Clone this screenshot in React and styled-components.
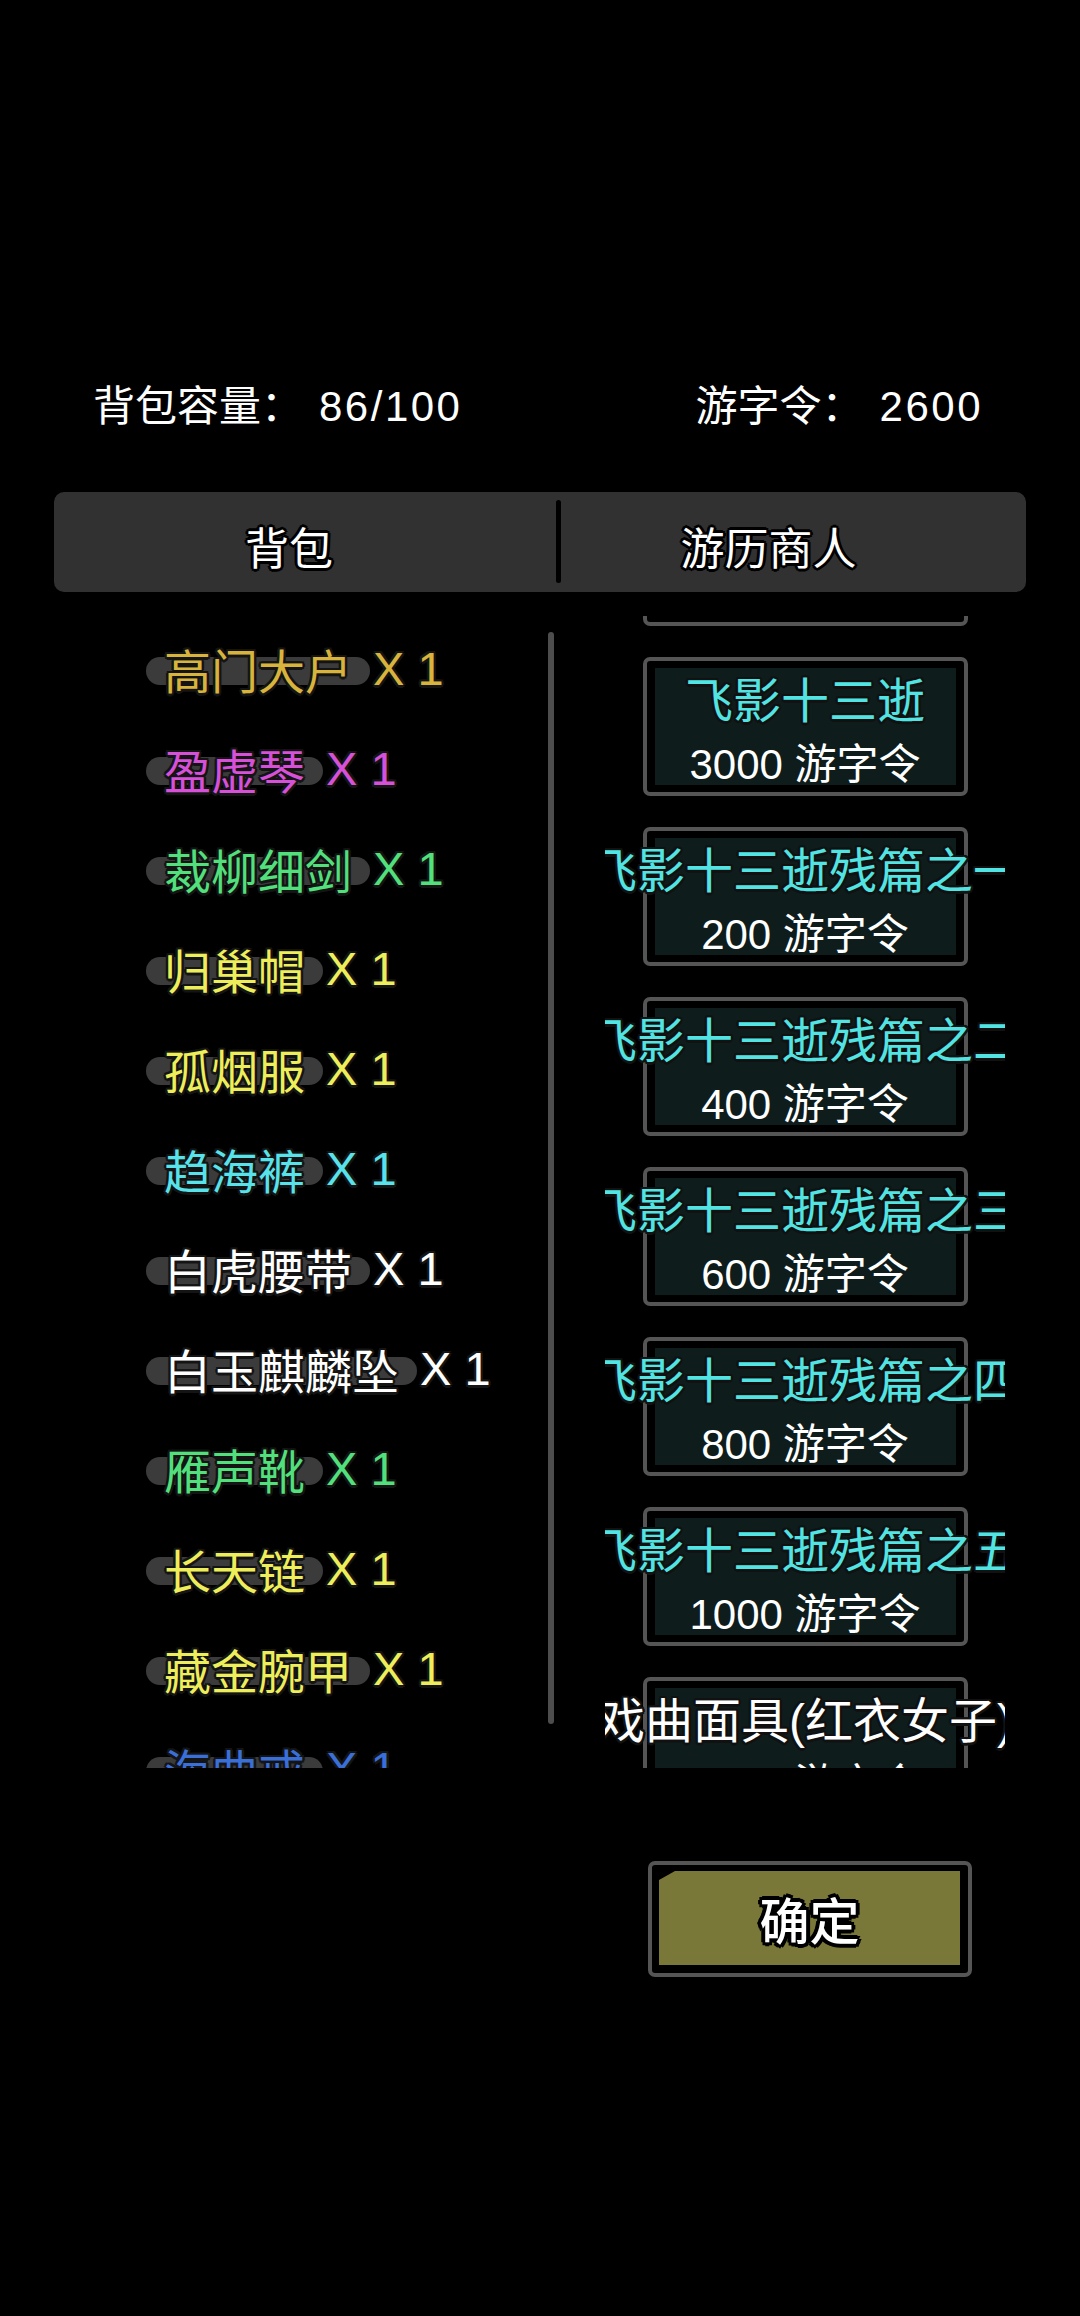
import styled, { createGlobalStyle } from "styled-components";

const outline = (c, w) => {
  const d = (w * 0.7).toFixed(1);
  return `${w}px 0 ${c}, -${w}px 0 ${c}, 0 ${w}px ${c}, 0 -${w}px ${c}, ${d}px ${d}px ${c}, -${d}px ${d}px ${c}, ${d}px -${d}px ${c}, -${d}px -${d}px ${c}`;
};

const GlobalStyle = createGlobalStyle`
  html, body {
    margin: 0;
    padding: 0;
    background: #000;
  }
  body {
    font-family: "Liberation Sans", "Noto Sans CJK SC", sans-serif;
    color: #fff;
  }
`;

const Page = styled.div`
  width: 1080px;
  min-height: 2316px;
  padding-top: 377px;
  box-sizing: border-box;
  background: #000;
`;

const Header = styled.div`
  display: flex;
  justify-content: space-between;
  padding: 0 97px 0 93px;
  height: 60px;
  line-height: 60px;
  font-size: 42px;
  color: #fff;
`;

const Stat = styled.div`
  display: flex;
  gap: 16px;
  white-space: nowrap;
`;

const StatValue = styled.span`
  letter-spacing: 2.5px;
`;

const TabBar = styled.div`
  display: flex;
  margin: 55px 54px 0;
  height: 100px;
  background: #313131;
  border-radius: 10px;
`;

const Tab = styled.div`
  flex: ${(p) => (p.$width ? "none" : "1")};
  width: ${(p) => (p.$width ? `${p.$width}px` : "auto")};
  box-sizing: border-box;
  display: flex;
  align-items: center;
  justify-content: center;
  padding-right: ${(p) => p.$shift}px;
  padding-top: 8px;
  font-size: 44px;
  color: #fff;
  text-shadow: ${outline("#000", 3)};
`;

const Divider = styled.div`
  width: 5px;
  margin: 8px 0 9px;
  background: #000;
  border-radius: 3px;
`;

const Content = styled.div`
  display: flex;
  margin-top: 24px;
  height: 1152px;
`;

const LeftPanel = styled.div`
  width: 548px;
  overflow: hidden;
  padding-top: 2px;
  box-sizing: border-box;
`;

const Item = styled.div`
  height: 100px;
  display: flex;
  align-items: center;
  padding-left: 164px;
  font-size: 47px;
  white-space: nowrap;
  position: relative;
  isolation: isolate;
  color: ${(p) => p.$color};
  text-shadow: ${outline("#141414", 2.5)};
`;

const Name = styled.span`
  position: relative;
  &::before {
    content: "";
    position: absolute;
    left: -18px;
    right: -18px;
    top: 54%;
    height: 28px;
    transform: translateY(-50%);
    border-radius: 14px;
    background: #3b3b3b;
    z-index: -1;
  }
`;

const Count = styled.span`
  margin-left: 21px;
`;

const Scrollbar = styled.div`
  width: 6px;
  margin-top: 16px;
  height: 1092px;
  background: #4d4d4d;
  border-radius: 3px;
`;

const RightPanel = styled.div`
  margin-left: 51px;
  width: 400px;
  overflow: hidden;
  display: flex;
  flex-direction: column;
  align-items: center;
  gap: 31px;
  & > :first-child {
    margin-top: -129px;
  }
`;

const Card = styled.div`
  flex: none;
  width: 325px;
  height: 139px;
  box-sizing: border-box;
  border: 4px solid #555;
  border-radius: 7px;
  padding: 7px 8px;
  background: #000;
`;

const CardFill = styled.div`
  height: 100%;
  box-sizing: border-box;
  padding-top: 8px;
  background: #0e1c1c;
  display: flex;
  flex-direction: column;
  align-items: center;
`;

const CardTitle = styled.div`
  flex: none;
  font-size: 48px;
  line-height: 52px;
  white-space: nowrap;
  color: ${(p) => p.$color};
  text-shadow: ${outline("#111", 2.5)};
`;

const CardPrice = styled.div`
  flex: none;
  margin-top: 15px;
  font-size: 42px;
  line-height: 44px;
  white-space: nowrap;
  color: #fff;
`;

const Footer = styled.div`
  margin-top: 93px;
  padding-left: 648px;
`;

const ConfirmButton = styled.div`
  width: 324px;
  height: 116px;
  box-sizing: border-box;
  border: 4px solid #555;
  border-radius: 7px;
  padding: 6px 8px 8px 7px;
  background: #000;
`;

const ConfirmFill = styled.div`
  height: 100%;
  background: #7a7839;
  clip-path: polygon(16px 0, 100% 0, 100% 100%, 0 100%, 0 9px);
  display: flex;
  align-items: center;
  justify-content: center;
  font-size: 50px;
  font-weight: 500;
  color: #fff;
  text-shadow: ${outline("#000", 4)};
`;

const items = [
  { name: "高门大户", color: "#d8b43c" },
  { name: "盈虚琴", color: "#d650d8" },
  { name: "裁柳细剑", color: "#52e07c" },
  { name: "归巢帽", color: "#eeee5a" },
  { name: "孤烟服", color: "#eeee5a" },
  { name: "趋海裤", color: "#58e2ea" },
  { name: "白虎腰带", color: "#ffffff" },
  { name: "白玉麒麟坠", color: "#ffffff" },
  { name: "雁声靴", color: "#52e07c" },
  { name: "长天链", color: "#eeee5a" },
  { name: "藏金腕甲", color: "#eeee5a" },
  { name: "海曲戒", color: "#3a6fd8" },
];

const CYAN = "#52e4e2";

const goods = [
  { title: "飞影十三逝", price: 3000, color: CYAN },
  { title: "飞影十三逝", price: 3000, color: CYAN },
  { title: "飞影十三逝残篇之一", price: 200, color: CYAN },
  { title: "飞影十三逝残篇之二", price: 400, color: CYAN },
  { title: "飞影十三逝残篇之三", price: 600, color: CYAN },
  { title: "飞影十三逝残篇之四", price: 800, color: CYAN },
  { title: "飞影十三逝残篇之五", price: 1000, color: CYAN },
  { title: "戏曲面具(红衣女子)", price: 2400, color: "#ffffff" },
];

const App = () => {
  return (
    <Page>
      <GlobalStyle />
      <Header>
        <Stat>
          <span>背包容量：</span>
          <StatValue>86/100</StatValue>
        </Stat>
        <Stat>
          <span>游字令：</span>
          <StatValue>2600</StatValue>
        </Stat>
      </Header>

      <TabBar>
        <Tab $width={502} $shift={32}>背包</Tab>
        <Divider />
        <Tab $shift={50}>游历商人</Tab>
      </TabBar>

      <Content>
        <LeftPanel>
          {items.map((item, i) => (
            <Item key={i} $color={item.color}>
              <Name>{item.name}</Name>
              <Count>X 1</Count>
            </Item>
          ))}
        </LeftPanel>
        <Scrollbar />
        <RightPanel>
          {goods.map((g, i) => (
            <Card key={i}>
              <CardFill>
                <CardTitle $color={g.color}>{g.title}</CardTitle>
                <CardPrice>{g.price} 游字令</CardPrice>
              </CardFill>
            </Card>
          ))}
        </RightPanel>
      </Content>

      <Footer>
        <ConfirmButton>
          <ConfirmFill>确定</ConfirmFill>
        </ConfirmButton>
      </Footer>
    </Page>
  );
};

export default App;
